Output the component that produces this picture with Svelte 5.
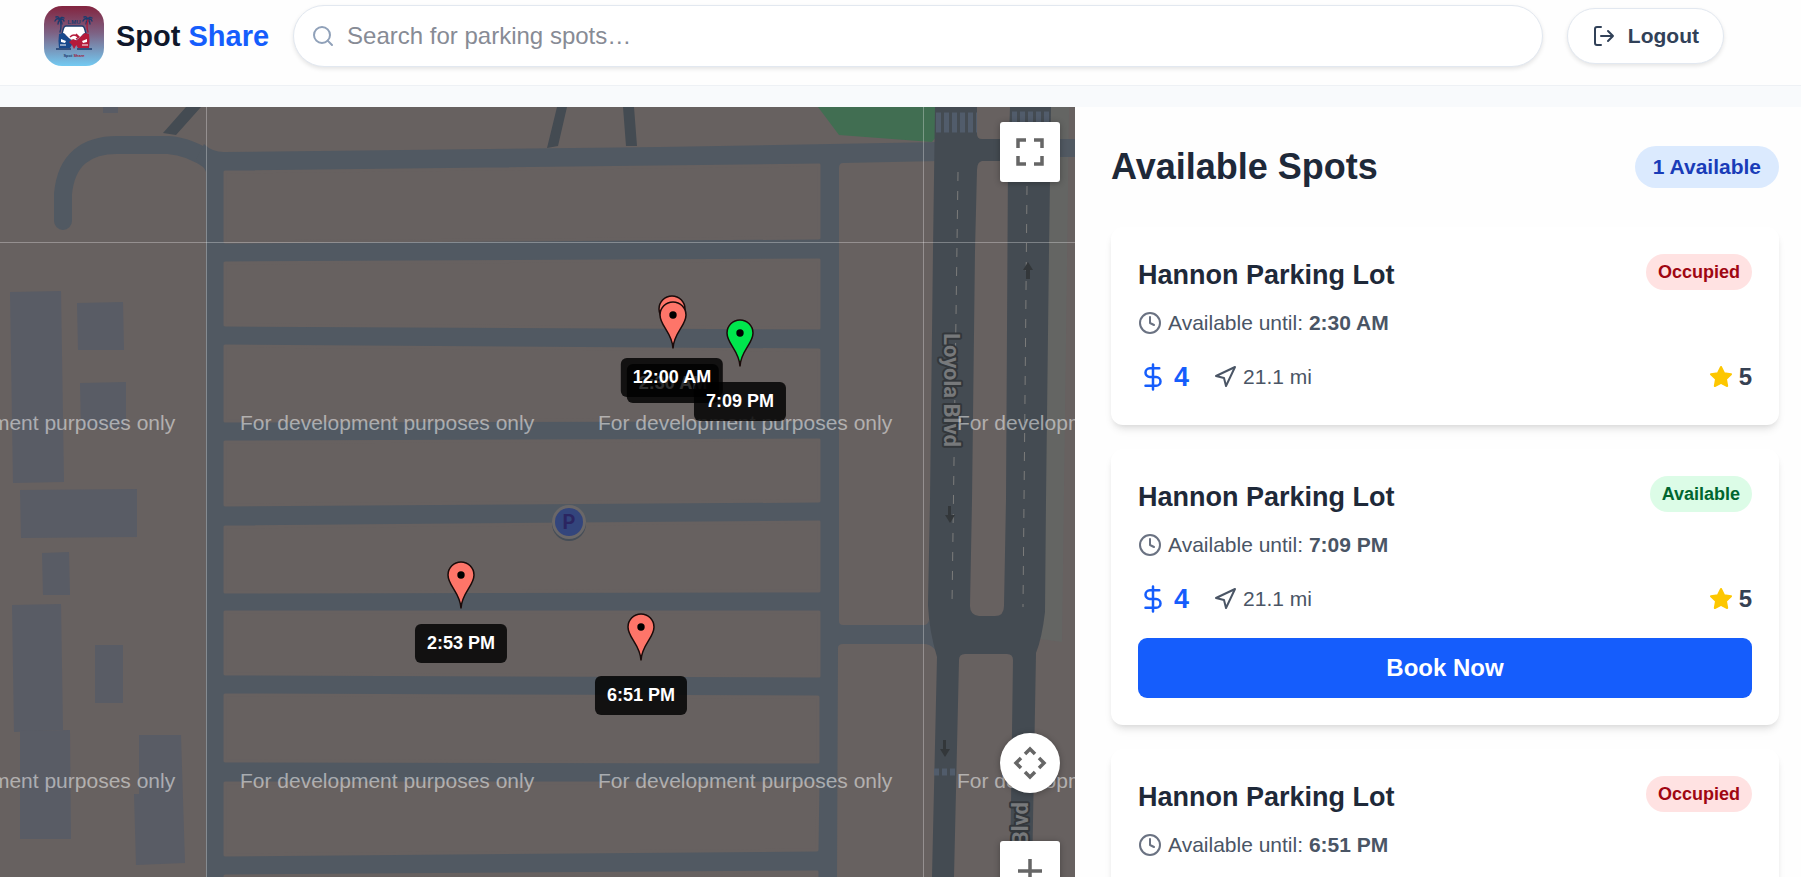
<script>
	let query = $state('');

	const spots = [
		{ id: 1, name: 'Hannon Parking Lot', until: '2:30 AM', price: 4, distance: '21.1 mi', rating: 5, open: false },
		{ id: 2, name: 'Hannon Parking Lot', until: '7:09 PM', price: 4, distance: '21.1 mi', rating: 5, open: true },
		{ id: 3, name: 'Hannon Parking Lot', until: '6:51 PM', price: 4, distance: '21.1 mi', rating: 5, open: false }
	];

	const available = spots.filter((s) => s.open).length;

	// x / y is the tip of the pin on the map
	const markers = [
		{ time: '2:53 PM', x: 461, y: 502, open: false },
		{ time: '6:51 PM', x: 641, y: 554, open: false },
		{ time: '2:30 AM', x: 673, y: 242, open: false, front: true },
		{ time: '12:00 AM', x: 672, y: 236, open: false },
		{ time: '7:09 PM', x: 740, y: 260, open: true }
	];

	const lots = [
		'225,172 819,165 819,238 225,242',
		'225,263 819,260 819,328 225,325',
		'225,346 819,350 819,420 225,421',
		'225,442 819,440 819,501 225,505',
		'225,527 819,522 819,591 225,592',
		'225,612 819,612 819,676 225,674',
		'225,695 818,697 818,762 225,761',
		'225,783 818,783 817,850 225,855',
		'225,876 817,872 817,900 225,900'
	];

	const buildings = [
		'103,107 118,107 118,113 103,113',
		'10,292 61,291 64,482 13,483',
		'77,303 123,302 124,350 78,350',
		'80,383 126,382 126,428 81,429',
		'20,490 137,489 137,537 21,538',
		'42,553 69,552 70,595 43,595',
		'12,605 61,604 63,730 14,732',
		'95,645 123,645 123,703 95,703',
		'20,731 70,730 71,839 20,839',
		'139,735 181,735 185,863 136,865 134,794 139,794'
	];

	const watermarks = [-119, 240, 598, 957];
</script>

<div class="page">
	<header>
		<div class="brand">
			<svg class="logo" viewBox="0 0 60 60" aria-hidden="true">
				<defs>
					<linearGradient id="sky" x1="0" y1="0" x2="0" y2="1">
						<stop offset="0" stop-color="#83243f" />
						<stop offset="0.45" stop-color="#7d6284" />
						<stop offset="1" stop-color="#73caf2" />
					</linearGradient>
				</defs>
				<rect width="60" height="60" rx="18" fill="url(#sky)" />
				<g fill="none" stroke="#1d3c6e" stroke-width="1.4" stroke-linecap="round">
					<path d="M16 14q-3-3-5 1M16 14q-1-4-4-3M16 14q1-4 4-2M16 14q3-2 4 1M16 14q-2 1-2 4M16 14q2 1 2 4" />
					<path d="M44 14q-3-3-5 1M44 14q-1-4-4-3M44 14q1-4 4-2M44 14q3-2 4 1M44 14q-2 1-2 4M44 14q2 1 2 4" />
					<path d="M16 14q2 6 0 12" />
					<path d="M44 14q-2 6 0 12" stroke="#a3203d" />
				</g>
				<text x="30" y="18" class="lmu">LMU</text>
				<path d="M22 20h16q2 0 3 4l1 4H18l1-4q1-4 3-4z" fill="#fff" stroke="#1d3c6e" stroke-width="1.4" />
				<path d="M15 28l4-1 6 5 4 5-3 5H15q-1-8 0-14z" fill="#17498c" />
				<path d="M45 28l-4-1-6 5-4 5 3 5h11q1-8 0-14z" fill="#b51a3a" />
				<path d="M20 27h20l-5 5-5 3-5-3z" fill="#fff" />
				<path d="M26 31q4-4 8 0M32 28l3 3-3 2" fill="none" stroke="#b51a3a" stroke-width="1.4" />
				<path d="M25 36l4-3 5 2-1 3-3 5-2-4z" fill="#b51a3a" />
				<path d="M17 33l5 2-1 2-4-1zM43 33l-5 2 1 2 4-1z" fill="#fff" />
				<path d="M16 39h6M38 39h6" stroke="#fff" stroke-width="1" />
				<path d="M12 43h15M33 43h15" stroke="#1d3c6e" stroke-width="1.4" />
				<text x="30" y="51" class="tiny">Spot <tspan fill="#9c1c3c">Share</tspan></text>
			</svg>
			<span class="name">Spot <em>Share</em></span>
		</div>

		<label class="search">
			<svg class="icon" viewBox="0 0 24 24" aria-hidden="true">
				<circle cx="11" cy="11" r="8" />
				<path d="m21 21-4.34-4.34" />
			</svg>
			<input type="text" aria-label="Search for parking spots" placeholder="Search for parking spots…" bind:value={query} />
		</label>

		<button class="logout">
			<svg class="icon" viewBox="0 0 24 24" aria-hidden="true">
				<path d="m16 17 5-5-5-5M21 12H9M9 21H5a2 2 0 0 1-2-2V5a2 2 0 0 1 2-2h4" />
			</svg>
			Logout
		</button>
	</header>

	<main>
		<section class="map" aria-label="Map">
			<svg class="tiles" viewBox="0 107 1075 770" preserveAspectRatio="xMinYMin slice">
				<g class="building">
					{#each buildings as points}
						<polygon {points} />
					{/each}
				</g>

				<polygon class="grass" points="818,107 839,135 932,142 936,137 936,107" />
				<polygon class="path" points="1051,107 1069,107 1062,642 1040,639" />

				<!-- side streets around the lot -->
				<path class="lane" d="M63 221v-27C66 160 86 144 120 145H168C185 146 198 152 212 162" />
				<path class="street" d="M204 144Q212 152 224 152L660 147 940 142V161L843 163Q839 163 839 168V621Q839 625 843 625H924Q928 625 929 620L940 660Q935 644 924 644H843Q838 644 838 648L837 877H206V172Q204 166 196 160z" />
				<g class="lot">
					{#each lots as points}
						<polygon {points} />
					{/each}
				</g>
				<path class="street" d="M1050 139h25v18h-25z" />
				<path class="loyola" d="M186 107h15l-25 28-13-2zM557 107h10l-9 39-11 2zM623 107h11l3 39h-11z" />

				<!-- Loyola Blvd, both carriageways -->
				<path
					class="loyola"
					fill-rule="evenodd"
					d="M935 107H977V134Q977 139 982 139H1009L1010 107H1051L1049 250 1046 500 1045 612Q1042 638 1036 653L1032 877H1010L1013 660Q1013 654 1007 654H965Q959 654 959 660L954 877H932L937 657Q929 630 928 605L930 500 933 250z
					M982 161Q977 162 977 170L975 250 972 500 970 606Q970 615 979 616H995Q1004 616 1004 606L1006 500 1008 161z"
				/>
				<path class="dashes" d="M958 172L952 605M1027 186L1023 607" />
				<path class="stripes" d="M936 122.500H977M1012 121.500H1051" />
				<path class="stripes small" d="M934 772H956" />
				<g class="arrow">
					<path d="M1028 262l5 8h-3v9h-4v-9h-3z" />
					<path d="M950 523l-5-8h3v-9h3v9h4z" />
					<path d="M945 757l-5-8h3v-9h3v9h4z" />
				</g>
				<text class="road" transform="translate(944 333) rotate(90)">Loyola Blvd</text>
				<text class="road" transform="translate(1028 802) rotate(-90)" text-anchor="end">Loyola Blvd</text>

				<circle cx="569" cy="524" r="17" fill="#454d57" />
				<circle cx="569" cy="522" r="17" fill="#6a6768" />
				<circle cx="569" cy="522" r="14" fill="#33457c" />
				<text class="parking" x="569" y="529">P</text>

				<path class="seam" d="M0 242.500H1075M206.500 107V877M923.500 107V877" />

				<g class="watermark">
					{#each watermarks as x}
						<text {x} y="430">For development purposes only</text>
						<text {x} y="788">For development purposes only</text>
					{/each}
				</g>
			</svg>

			{#each markers as marker}
				<svg
					class="pin"
					class:front={marker.front}
					style="left: {marker.x}px; top: {marker.y}px"
					viewBox="0 0 28 48"
					aria-hidden="true"
				>
					<path d="M14 47.500C13.500 32 1 25 1 14a13 13 0 0 1 26 0C27 25 14.500 32 14 47.500z" fill={marker.open ? '#00e64d' : '#fe7569'} />
					<circle cx="14" cy="14" r="3.700" />
				</svg>
				<span class="time" style="left: {marker.x}px; top: {marker.y}px">{marker.time}</span>
			{/each}

			<button class="control fullscreen" aria-label="Toggle fullscreen view">
				<svg viewBox="0 0 28 28"><path d="M2 10V2h8M18 2h8v8M26 18v8h-8M10 26H2v-8" /></svg>
			</button>
			<div class="controls">
				<button class="control round" aria-label="Map camera controls">
					<svg class="camera" viewBox="0 0 36 36">
						<path d="M13 9l5-5 5 5M27 13l5 5-5 5M23 27l-5 5-5-5M9 23l-5-5 5-5" />
					</svg>
				</button>
				<button class="control" aria-label="Zoom in">
					<svg viewBox="0 0 28 28"><path d="M14 2v24M2 14h24" /></svg>
				</button>
			</div>
		</section>

		<aside>
			<div class="heading">
				<h1>Available Spots</h1>
				<span class="count">{available} Available</span>
			</div>

			{#each spots as spot (spot.id)}
				<article>
					<div class="row top">
						<h2>{spot.name}</h2>
						<span class="badge" class:open={spot.open}>{spot.open ? 'Available' : 'Occupied'}</span>
					</div>
					<div class="until">
						<svg class="icon" viewBox="0 0 24 24" aria-hidden="true">
							<circle cx="12" cy="12" r="10" />
							<path d="M12 6v6l4 2" />
						</svg>
						<span>Available until: <strong>{spot.until}</strong></span>
					</div>
					<div class="row">
						<div class="facts">
							<span class="price">
								<svg class="icon big" viewBox="0 0 24 24" aria-hidden="true">
									<path d="M12 2v20M17 5H9.500a3.500 3.500 0 0 0 0 7h5a3.500 3.500 0 0 1 0 7H6" />
								</svg>
								{spot.price}
							</span>
							<span class="distance">
								<svg class="icon" viewBox="0 0 24 24" aria-hidden="true">
									<path d="M3 11 22 2 13 21 11 13z" />
								</svg>
								{spot.distance}
							</span>
						</div>
						<span class="rating">
							<svg class="icon star" viewBox="0 0 24 24" aria-hidden="true">
								<path d="M12 2l3.090 6.260L22 9.270l-5 4.870 1.180 6.880L12 17.770l-6.180 3.250L7 14.140 2 9.270l6.910-1.010z" />
							</svg>
							{spot.rating}
						</span>
					</div>
					{#if spot.open}
						<button class="book">Book Now</button>
					{/if}
				</article>
			{/each}
		</aside>
	</main>
</div>

<style>
	:global(body) {
		overflow: hidden;
	}

	.page {
		display: flex;
		flex-direction: column;
		height: 100vh;
		background: #f8fafc;
		font-family: "Liberation Sans", Arial, sans-serif;
		font-size: 21px;
		line-height: 30px;
		color: #4a5565;
	}

	button, input {
		font: inherit;
		color: inherit;
	}

	button {
		cursor: pointer;
	}

	h1, h2 {
		margin: 0;
		color: #1e2939;
	}

	.icon {
		flex: none;
		width: 24px;
		height: 24px;
		fill: none;
		stroke: currentColor;
		stroke-width: 2;
		stroke-linecap: round;
		stroke-linejoin: round;
	}

	/* header */
	header {
		display: flex;
		align-items: center;
		gap: 24px;
		padding: 5px 77px 18px 44px;
		border-bottom: 1px solid #eef1f5;
		background: #fefefe;
	}

	.brand {
		display: flex;
		align-items: center;
		gap: 12px;
	}

	.logo {
		width: 60px;
		height: 60px;
	}

	.lmu, .tiny {
		font-size: 6px;
		font-weight: bold;
		text-anchor: middle;
		fill: #1d3c6e;
	}

	.tiny {
		font-size: 4px;
	}

	.name {
		font-size: 29px;
		font-weight: bold;
		color: #0f172b;
		white-space: nowrap;
	}

	.name em {
		font-style: normal;
		color: #155dfc;
	}

	.search {
		flex: 1;
		display: flex;
		align-items: center;
		gap: 12px;
		height: 62px;
		box-sizing: border-box;
		padding: 0 17px;
		border: 1px solid #e2e8f0;
		border-radius: 31px;
		background: #fff;
		box-shadow: 0 2px 4px rgba(0, 0, 0, 0.1);
		color: #90a1b9;
	}

	.search input {
		flex: 1;
		min-width: 0;
		padding: 0;
		border: none;
		outline: none;
		background: none;
		font-size: 24px;
		line-height: 36px;
		color: #0f172b;
	}

	.search input::placeholder {
		color: #878b95;
		opacity: 1;
	}

	.logout {
		display: flex;
		align-items: center;
		gap: 12px;
		padding: 12px 24px;
		border: 1px solid #e2e8f0;
		border-radius: 28px;
		background: #fff;
		box-shadow: 0 2px 4px rgba(0, 0, 0, 0.1);
		font-weight: bold;
		color: #314158;
	}

	main {
		flex: 1;
		display: flex;
		min-height: 0;
		margin-top: 21px;
	}

	/* map */
	.map {
		flex: 1;
		position: relative;
		overflow: hidden;
		background: #676160;
	}

	.tiles {
		display: block;
		width: 100%;
		height: 100%;
	}

	.building { fill: #595c65; }
	.grass { fill: #416e52; }
	.path { fill: #646563; }
	.street { fill: #515962; }
	.loyola { fill: #444b52; }

	.lot {
		fill: #676160;
		stroke: #676160;
		stroke-width: 3;
		stroke-linejoin: round;
	}

	.lane {
		fill: none;
		stroke: #515962;
		stroke-width: 18;
		stroke-linecap: round;
	}

	.dashes {
		fill: none;
		stroke: #7c7c7b;
		stroke-width: 1;
		stroke-dasharray: 9 10;
	}

	.stripes {
		fill: none;
		stroke: #515c6b;
		stroke-width: 20;
		stroke-dasharray: 5 3;
	}

	.stripes.small {
		stroke-width: 7;
	}

	.arrow {
		fill: #33373a;
	}

	.road {
		font: bold 22px Roboto, sans-serif;
		fill: #77797b;
		stroke: #33373b;
		stroke-width: 4;
		stroke-linejoin: round;
		paint-order: stroke;
	}

	.parking {
		font: bold 20px Roboto, sans-serif;
		text-anchor: middle;
		fill: #2b2561;
	}

	.seam {
		fill: none;
		stroke: rgba(255, 255, 255, 0.3);
	}

	.watermark {
		fill: rgba(255, 255, 255, 0.5);
	}

	.pin {
		position: absolute;
		width: 28px;
		height: 48px;
		transform: translate(-50%, -100%);
	}

	.pin path {
		stroke: #1a0b0a;
		stroke-width: 1.5;
	}

	.pin.front {
		z-index: 1;
	}

	.time {
		position: absolute;
		margin-top: 15px;
		padding: 6px 12px;
		border-radius: 6px;
		background: rgba(0, 0, 0, 0.82);
		color: #fff;
		font-size: 18px;
		font-weight: bold;
		line-height: 27px;
		white-space: nowrap;
		transform: translateX(-50%);
	}

	.control {
		display: flex;
		align-items: center;
		justify-content: center;
		width: 60px;
		height: 60px;
		padding: 0;
		border: none;
		border-radius: 3px;
		background: #fff;
		box-shadow: 0 1px 6px rgba(0, 0, 0, 0.3);
	}

	.control svg {
		width: 28px;
		height: 28px;
		fill: none;
		stroke: #666;
		stroke-width: 3.5;
	}

	.control .camera {
		width: 36px;
		height: 36px;
	}

	.control.round {
		border-radius: 50%;
	}

	.fullscreen {
		position: absolute;
		top: 15px;
		right: 15px;
	}

	.controls {
		position: absolute;
		right: 15px;
		bottom: -24px;
		display: flex;
		flex-direction: column;
		gap: 48px;
	}

	/* list of spots */
	aside {
		width: 726px;
		box-sizing: border-box;
		padding: 36px 22px 36px 36px;
		background: #fefefe;
		overflow-y: auto;
		scrollbar-width: none;
	}

	.heading {
		display: flex;
		align-items: center;
		justify-content: space-between;
		margin-bottom: 36px;
	}

	h1 {
		font-size: 36px;
		line-height: 48px;
	}

	.count {
		padding: 6px 18px;
		border-radius: 21px;
		background: #dbeafe;
		font-weight: bold;
		color: #193cb8;
	}

	article {
		margin-bottom: 24px;
		padding: 27px;
		border-radius: 12px;
		background: #fff;
		box-shadow: 0 6px 9px -2px rgba(0, 0, 0, 0.1), 0 3px 6px -3px rgba(0, 0, 0, 0.1);
	}

	.row {
		display: flex;
		align-items: center;
		justify-content: space-between;
	}

	.row.top {
		align-items: flex-start;
	}

	h2 {
		font-size: 27px;
		line-height: 42px;
	}

	.badge {
		padding: 6px 12px;
		border-radius: 18px;
		background: #ffe2e2;
		font-size: 18px;
		font-weight: bold;
		line-height: 24px;
		color: #9f0712;
	}

	.badge.open {
		background: #dcfce7;
		color: #016630;
	}

	.until {
		display: flex;
		align-items: center;
		gap: 6px;
		margin: 12px 0 18px;
	}

	.until .icon {
		color: #6a7282;
	}

	.facts {
		display: flex;
		align-items: center;
		gap: 24px;
	}

	.price, .distance, .rating {
		display: flex;
		align-items: center;
		gap: 6px;
	}

	.price {
		font-size: 27px;
		font-weight: bold;
		line-height: 42px;
		color: #155dfc;
	}

	.icon.big {
		width: 30px;
		height: 30px;
	}

	.rating {
		font-size: 24px;
		font-weight: bold;
		color: #364153;
	}

	.star {
		fill: #fdc700;
		stroke: #fdc700;
	}

	.book {
		display: block;
		width: 100%;
		margin-top: 18px;
		padding: 12px;
		border: none;
		border-radius: 9px;
		background: #155dfc;
		font-size: 24px;
		font-weight: bold;
		line-height: 36px;
		color: #fff;
	}
</style>
